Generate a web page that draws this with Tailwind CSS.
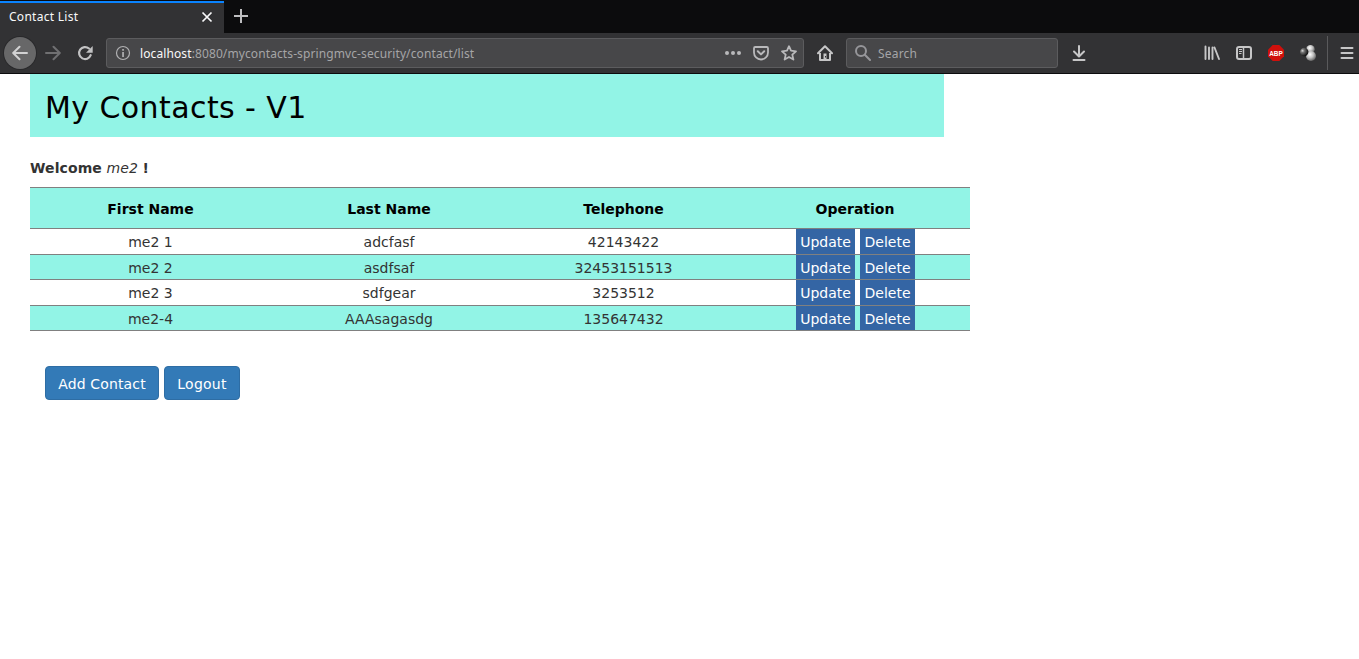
<!DOCTYPE html>
<html lang="en">
<head>
<meta charset="utf-8">
<title>Contact List</title>
<script src="https://cdn.jsdelivr.net/npm/@tailwindcss/browser@4"></script>
</head>
<body class="h-screen overflow-hidden bg-white font-['DejaVu_Sans',sans-serif] text-[14px] text-[#333]">
<header class="flex h-[74px] flex-col border-b border-[#0c0c0d] bg-[#323234] font-['Noto_Sans',sans-serif]">
  <div class="flex h-[33px] shrink-0 bg-[#0c0c0d]">
    <div class="mt-px flex w-[224px] items-center justify-between border-t-2 border-[#0a84ff] bg-[#323234] pr-[11px] pb-[3px] pl-[9px]">
      <span class="text-[12px] leading-4 tracking-[0.28px] whitespace-nowrap text-[#f9f9fa]">Contact List</span>
      <svg class="size-3" viewBox="0 0 12 12" fill="none" stroke="#f9f9fa" stroke-width="1.700"><path d="M1.500 1.500l9 9M10.500 1.500l-9 9"/></svg>
    </div>
    <svg class="mt-[9px] ml-[9px] size-4" viewBox="0 0 16 16" fill="none" stroke="#bebec0" stroke-width="2"><path d="M8 0v14M1 7h14"/></svg>
  </div>
  <div class="flex h-10 shrink-0 items-center">
    <div class="ml-1 flex size-8 shrink-0 items-center justify-center rounded-full bg-[#676768] ring-1 ring-[#29292b]">
      <svg class="size-4" viewBox="0 0 16 16" fill="none" stroke="#d2d2d3" stroke-width="2" stroke-linecap="round" stroke-linejoin="round"><path d="M15 8H1.500M7.500 1.700L1.200 8l6.300 6.300"/></svg>
    </div>
    <svg class="ml-[9px] size-4 shrink-0" viewBox="0 0 16 16" fill="none" stroke="#707072" stroke-width="2" stroke-linecap="round" stroke-linejoin="round"><path d="M1 8h13.500M8.500 1.700L14.800 8l-6.300 6.300"/></svg>
    <svg class="ml-4 size-4 shrink-0" viewBox="0 0 16 16"><path d="M13.700 10.200A6 6 0 1 1 12 3.500" fill="none" stroke="#c2c2c3" stroke-width="2.200" stroke-linecap="round"/><path d="M15.700 1v6.700H9z" fill="#c2c2c3"/></svg>
    <div class="ml-[13px] flex h-[30px] w-[698px] shrink-0 items-center rounded-[3px] border border-[#5c5c5e] bg-[#474749] pr-[6px] pl-2">
      <svg class="size-4" viewBox="0 0 16 16"><circle cx="8" cy="8" r="6.500" fill="none" stroke="#b1b1b3" stroke-width="1.200"/><path d="M7.200 4h1.700v1.700H7.200zM7.200 7h1.700v5H7.200z" fill="#b1b1b3"/></svg>
      <span class="ml-[9px] pt-0.5 text-[12px] leading-4 tracking-[0.105px] whitespace-nowrap text-[#a5a5a7]"><span class="text-[#f9f9fa]">localhost</span>:8080/mycontacts-springmvc-security/contact/list</span>
      <svg class="ml-auto size-4" viewBox="0 0 16 16" fill="#b9b9bb"><circle cx="2" cy="8" r="2"/><circle cx="8" cy="8" r="2"/><circle cx="14" cy="8" r="2"/></svg>
      <svg class="ml-3 size-4" viewBox="0 0 16 16" fill="none" stroke="#b9b9bb" stroke-width="1.800" stroke-linecap="round" stroke-linejoin="round"><path d="M2.200 2h11.600Q15 2 15 3.200V7.500a7 7 0 0 1-14 0V3.200Q1 2 2.200 2z"/><path d="M4.800 6.300L8 9.400l3.200-3.100" stroke-width="2"/></svg>
      <svg class="ml-3 size-4" viewBox="0 0 16 16" fill="none" stroke="#b9b9bb" stroke-width="1.800" stroke-linejoin="round"><path d="M8 1.200l2 4.500 5 .6-3.700 3.300 1.100 5L8 12l-4.400 2.600 1.100-5L1 6.300l5-.6z"/></svg>
    </div>
    <svg class="ml-[13px] size-4 shrink-0" viewBox="0 0 16 16" fill="none" stroke="#c6c6c7"><path d="M1 8.200L8 1.200l7 7" stroke-width="2" stroke-linecap="round" stroke-linejoin="round"/><path d="M3 8v7h10V8" stroke-width="2" stroke-linejoin="round"/><path d="M6.500 8.500h3V15h-3z" fill="#c6c6c7" stroke="none"/><path d="M8.500 11v1.500" stroke="#323234"/></svg>
    <div class="ml-[13px] flex h-[30px] w-[212px] shrink-0 items-center rounded-[3px] border border-[#5c5c5e] bg-[#474749] pl-2">
      <svg class="size-4" viewBox="0 0 16 16" fill="none" stroke="#96969a" stroke-width="2" stroke-linecap="round"><circle cx="6" cy="6" r="5"/><path d="M9.800 9.800L15 15"/></svg>
      <span class="ml-[7px] pt-0.5 text-[12px] leading-4 tracking-[0.2px] text-[#a5a5a7]">Search</span>
    </div>
    <svg class="ml-[13px] size-4 shrink-0" viewBox="0 0 16 16" fill="none" stroke="#c6c6c7" stroke-width="2" stroke-linecap="round" stroke-linejoin="round"><path d="M8 1v10M3 6.500l5 5 5-5M2.500 15h11"/></svg>
    <div class="ml-auto flex items-center gap-4">
      <svg class="size-4" viewBox="0 0 16 16" fill="none" stroke="#c6c6c7" stroke-width="1.900" stroke-linecap="round"><path d="M1.500 1.500v12.500M5 2.500V14M8.500 2.500V14M10.500 2.500L15 14"/></svg>
      <svg class="size-4" viewBox="0 0 16 16" fill="none" stroke="#c6c6c7"><rect x="1" y="2" width="14" height="12" rx="2" stroke-width="2"/><path d="M7.500 2v12" stroke-width="1.500"/><path d="M3 4.500h3M3 6.500h3M3 8.500h2.500"/></svg>
      <svg class="size-4 overflow-visible" viewBox="0 0 16 16"><path d="M4.700 0h6.600L16 4.700v6.600L11.300 16H4.700L0 11.300V4.700z" fill="#d0100c"/><text x="8" y="10.600" fill="#fff" font-family="Liberation Sans" font-weight="bold" font-size="7.500" text-anchor="middle" textLength="13.500" lengthAdjust="spacingAndGlyphs">ABP</text></svg>
      <svg class="size-4" viewBox="0 0 16 16"><defs><radialGradient id="light" cx=".4" cy=".35" r=".65"><stop offset="0" stop-color="#fff"/><stop offset=".5" stop-color="#c4c4c4"/><stop offset="1" stop-color="#666"/></radialGradient><radialGradient id="dark" cx=".3" cy=".35" r=".7"><stop offset="0" stop-color="#ddd"/><stop offset=".3" stop-color="#777"/><stop offset="1" stop-color="#0c0c0c"/></radialGradient></defs><circle cx="10.500" cy="4.200" r="4.200" fill="url(#light)"/><circle cx="11" cy="11" r="5" fill="url(#light)"/><circle cx="4.200" cy="7" r="4.200" fill="url(#dark)"/></svg>
    </div>
    <div class="ml-[11px] h-[34px] w-px bg-[#5a5a5c]"></div>
    <svg class="mr-1 ml-[11px] size-4" viewBox="0 0 16 16" fill="none" stroke="#c6c6c7" stroke-width="2" stroke-linecap="round"><path d="M2.500 3h11M2.500 8h11M2.500 13h11"/></svg>
  </div>
</header>
<main class="pl-[30px]">
  <h1 class="flex h-[63px] w-[914px] items-center bg-[#92f4e6] pt-[5px] pl-[15px] text-[30px] leading-9 tracking-[0.42px] whitespace-nowrap text-black">My Contacts - V1</h1>
  <p class="mt-[21px] h-[29px] leading-5 tracking-[0.1px] whitespace-nowrap"><b>Welcome</b> <i>me2</i> <b>!</b></p>
  <table class="w-[940px] table-fixed border-separate border-spacing-0 text-center leading-5">
    <colgroup><col class="w-[241px]"><col class="w-[236px]"><col class="w-[233px]"><col class="w-[230px]"></colgroup>
    <thead>
      <tr class="h-[42px] bg-[#92f4e6] text-black *:border-y *:border-[#808080] *:p-0 *:pt-[2px]"><th>First Name</th><th>Last Name</th><th>Telephone</th><th>Operation</th></tr>
    </thead>
    <tbody class="[&_a]:bg-[#3465a4] [&_a]:pt-px [&_a]:pl-px [&_a]:text-white [&_div]:flex [&_div]:justify-center [&_div]:gap-[5px] [&_td]:border-b [&_td]:border-[#808080] [&_td]:p-0">
      <tr class="h-[26px] leading-[23px]"><td class="pt-0.5!">me2 1</td><td class="pt-0.5!">adcfasf</td><td class="pt-0.5!">42143422</td><td><div class="leading-[25px]"><a class="h-[25px] w-[59px]">Update</a><a class="h-[25px] w-[55px]">Delete</a></div></td></tr>
      <tr class="h-[25px] bg-[#92f4e6] leading-[22px]"><td class="pt-0.5!">me2 2</td><td class="pt-0.5!">asdfsaf</td><td class="pt-0.5!">32453151513</td><td><div class="leading-[25px]"><a class="h-[24px] w-[59px]">Update</a><a class="h-[24px] w-[55px]">Delete</a></div></td></tr>
      <tr class="h-[26px] leading-[23px]"><td class="pt-0.5!">me2 3</td><td class="pt-0.5!">sdfgear</td><td class="pt-0.5!">3253512</td><td><div class="leading-[25px]"><a class="h-[25px] w-[59px]">Update</a><a class="h-[25px] w-[55px]">Delete</a></div></td></tr>
      <tr class="h-[25px] bg-[#92f4e6] leading-[22px]"><td class="pt-0.5!">me2-4</td><td class="pt-0.5!">AAAsagasdg</td><td class="pt-0.5!">135647432</td><td><div class="leading-[25px]"><a class="h-[24px] w-[59px]">Update</a><a class="h-[24px] w-[55px]">Delete</a></div></td></tr>
    </tbody>
  </table>
  <div class="mt-[35px] ml-[15px] flex gap-[5px] text-white">
    <button class="h-[34px] w-[114px] rounded border border-[#2e6da4] bg-[#337ab7] pt-px leading-5 tracking-[0.15px] whitespace-nowrap">Add Contact</button>
    <button class="h-[34px] w-[76px] rounded border border-[#2e6da4] bg-[#337ab7] pt-px leading-5 tracking-[0.25px]">Logout</button>
  </div>
</main>
</body>
</html>
